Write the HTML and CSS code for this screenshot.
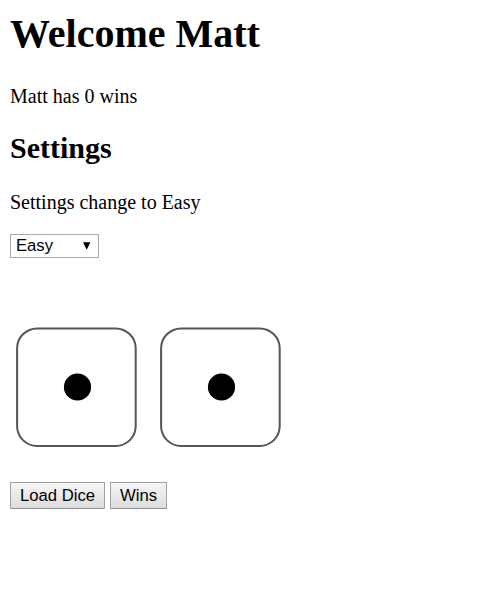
FILE: index.html
```html
<!DOCTYPE html>
<html lang="en">
<head>
<meta charset="utf-8">
<title>Dice</title>
<link rel="stylesheet" href="styles.css">
</head>
<body>
<h1 class="title">Welcome Matt</h1>
<p class="text">Matt has 0 wins</p>
<h2 class="subtitle">Settings</h2>
<p class="text">Settings change to Easy</p>
<div class="picker">
  <select class="select"><option>Easy</option></select>
  <svg class="arrow" width="8" height="8" viewBox="0 0 8 8"><path d="M0 .2h7.4L3.7 7.8z"/></svg>
</div>
<div class="dice">
  <svg class="die" width="122" height="120" viewBox="0 0 122 120"><rect x="1.1" y="1.4" width="118.6" height="117.6" rx="20"/><circle cx="61.5" cy="60" r="13.6"/></svg>
  <svg class="die" width="122" height="120" viewBox="0 0 122 120"><rect x="1.1" y="1.4" width="118.6" height="117.6" rx="20"/><circle cx="61.5" cy="60" r="13.6"/></svg>
</div>
<div class="actions">
  <button class="button load">Load Dice</button>
  <button class="button wins">Wins</button>
</div>
</body>
</html>
```
FILE: styles.css
```css
body {
  margin: 11px 10px 10px;
  background: #fff;
  color: #000;
  font: 20px/23px "Liberation Serif", serif;
}
.title {
  margin: 0 0 28px;
  font-size: 40px;
  line-height: 46px;
}
.text {
  margin: 0;
}
.subtitle {
  margin: 23px 0 26px;
  font-size: 30px;
  line-height: 34px;
}
.picker {
  position: relative;
  width: 89px;
  height: 24px;
  margin-top: 20px;
}
.select {
  appearance: none;
  display: block;
  box-sizing: border-box;
  width: 89px;
  height: 24px;
  margin: 0;
  padding: 0 0 1px 5px;
  border: 1px solid #a9a9a9;
  border-radius: 0;
  background: #fff;
  color: #000;
  font: 16.67px/20px "Liberation Sans", sans-serif;
}
.arrow {
  position: absolute;
  left: 73px;
  top: 8px;
  pointer-events: none;
}
.dice {
  display: flex;
  gap: 22px;
  margin: 69px 0 35px 6px;
}
.die rect {
  fill: #fff;
  stroke: #555;
  stroke-width: 2;
}
.actions {
  display: flex;
  gap: 5px;
}
.button {
  box-sizing: border-box;
  height: 27px;
  margin: 0;
  padding: 0;
  border: 1px solid #a0a0a0;
  border-bottom-color: #909090;
  border-radius: 1px;
  background: linear-gradient(#f6f6f6, #dcdcdc);
  color: #000;
  font: 16.67px/24px "Liberation Sans", sans-serif;
}
.load {
  width: 95px;
}
.wins {
  width: 57px;
}
```
